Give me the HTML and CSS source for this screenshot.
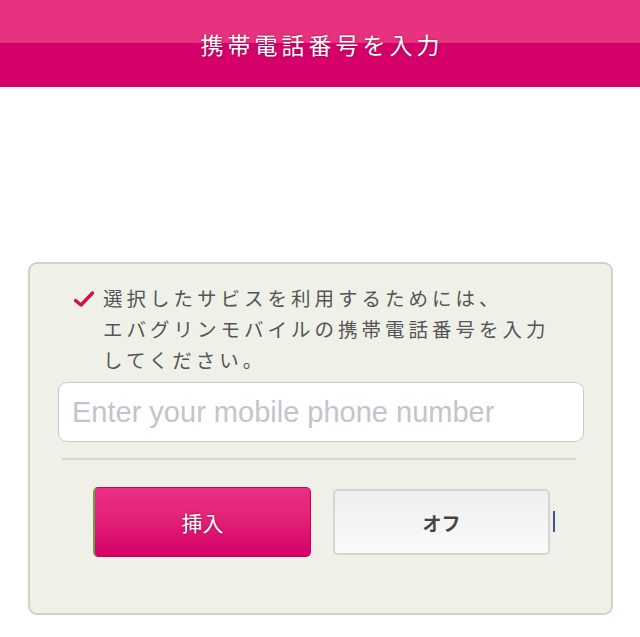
FILE: index.html
```html
<!DOCTYPE html>
<html lang="ja">
<head>
<meta charset="utf-8">
<link rel="stylesheet" href="styles.css">
</head>
<body>
<header class="topbar">
  <h1 class="title">携帯電話番号を入力</h1>
</header>
<main class="card">
  <p class="notice"><svg class="check" viewBox="0 0 20 16" width="20" height="16"><path d="M1.5 9.5 L7 14 L18.5 2" fill="none" stroke="#d4123e" stroke-width="3.4" stroke-linecap="round" stroke-linejoin="round"/></svg><span>選択したサビスを利用するためには、<br>エバグリンモバイルの携帯電話番号を入力<br>してください。</span></p>
  <input class="phone" type="text" placeholder="Enter your mobile phone number">
  <hr class="divider">
  <div class="actions">
    <button class="btn btn-insert">挿入</button>
    <button class="btn btn-off">オフ</button>
    <span class="caret"></span>
  </div>
</main>
</body>
</html>
```

FILE: styles.css
```css
html, body {
  margin: 0;
  padding: 0;
  background: #fff;
  font-family: "Noto Sans CJK JP", "Liberation Sans", sans-serif;
}
.topbar {
  height: 87px;
  background: linear-gradient(to bottom, #e7337f 0, #e7337f 43px, #d5006a 43px, #d5006a 100%);
  display: flex;
  align-items: center;
  justify-content: center;
}
.title {
  margin: 0;
  color: #fff;
  font-size: 23px;
  font-weight: normal;
  letter-spacing: 4px;
  padding-left: 4px;
  text-shadow: 0 0 3px rgba(120, 0, 50, 0.6);
}
.card {
  margin: 175px 0 0 28px;
  width: 585px;
  height: 353px;
  box-sizing: border-box;
  background: #eff1e9;
  border: 2px solid #cfd2c6;
  border-radius: 9px;
  padding: 18px 0 0 28px;
}
.notice {
  margin: 0 0 0 16px;
  display: flex;
  align-items: flex-start;
  color: #555;
  font-size: 19.5px;
  line-height: 31px;
  letter-spacing: 4px;
}
.check {
  flex: none;
  margin: 9px 9px 0 0;
}
.phone {
  display: block;
  margin-top: 7px;
  width: 526px;
  height: 60px;
  box-sizing: border-box;
  border: 1px solid #cacaca;
  border-radius: 9px;
  background: #fff;
  padding: 0 13px;
  font-family: "Liberation Sans", Arial, sans-serif;
  font-size: 29px;
  color: #333;
  outline: none;
}
.phone::placeholder {
  color: #c4c4cc;
}
.divider {
  margin: 16px 0 0 4px;
  width: 514px;
  height: 2px;
  border: 0;
  background: #d8d9d1;
}
.actions {
  margin: 27px 0 0 35px;
  display: flex;
  align-items: flex-start;
  gap: 22px;
}
.btn {
  font-family: "Noto Sans CJK JP", sans-serif;
  cursor: pointer;
  padding: 0;
}
.btn-insert {
  width: 218px;
  height: 70px;
  border: 1px solid #c8005e;
  border-left: 2px solid #6aa040;
  border-radius: 5px;
  background: linear-gradient(to bottom, #ea2f85 0%, #e42478 40%, #d50068 100%);
  color: #fff;
  font-size: 21px;
  text-shadow: 0 0 3px rgba(100, 0, 40, 0.6);
}
.btn-off {
  margin-top: 2px;
  width: 217px;
  height: 66px;
  border: 2px solid #d4d4d4;
  border-radius: 5px;
  background: linear-gradient(to bottom, #efeef0 0%, #fbfbfb 100%);
  color: #444;
  font-size: 19px;
  font-weight: bold;
}
.caret {
  margin: 24px 0 0 -19px;
  width: 2px;
  height: 21px;
  background: #3a5590;
}
```
